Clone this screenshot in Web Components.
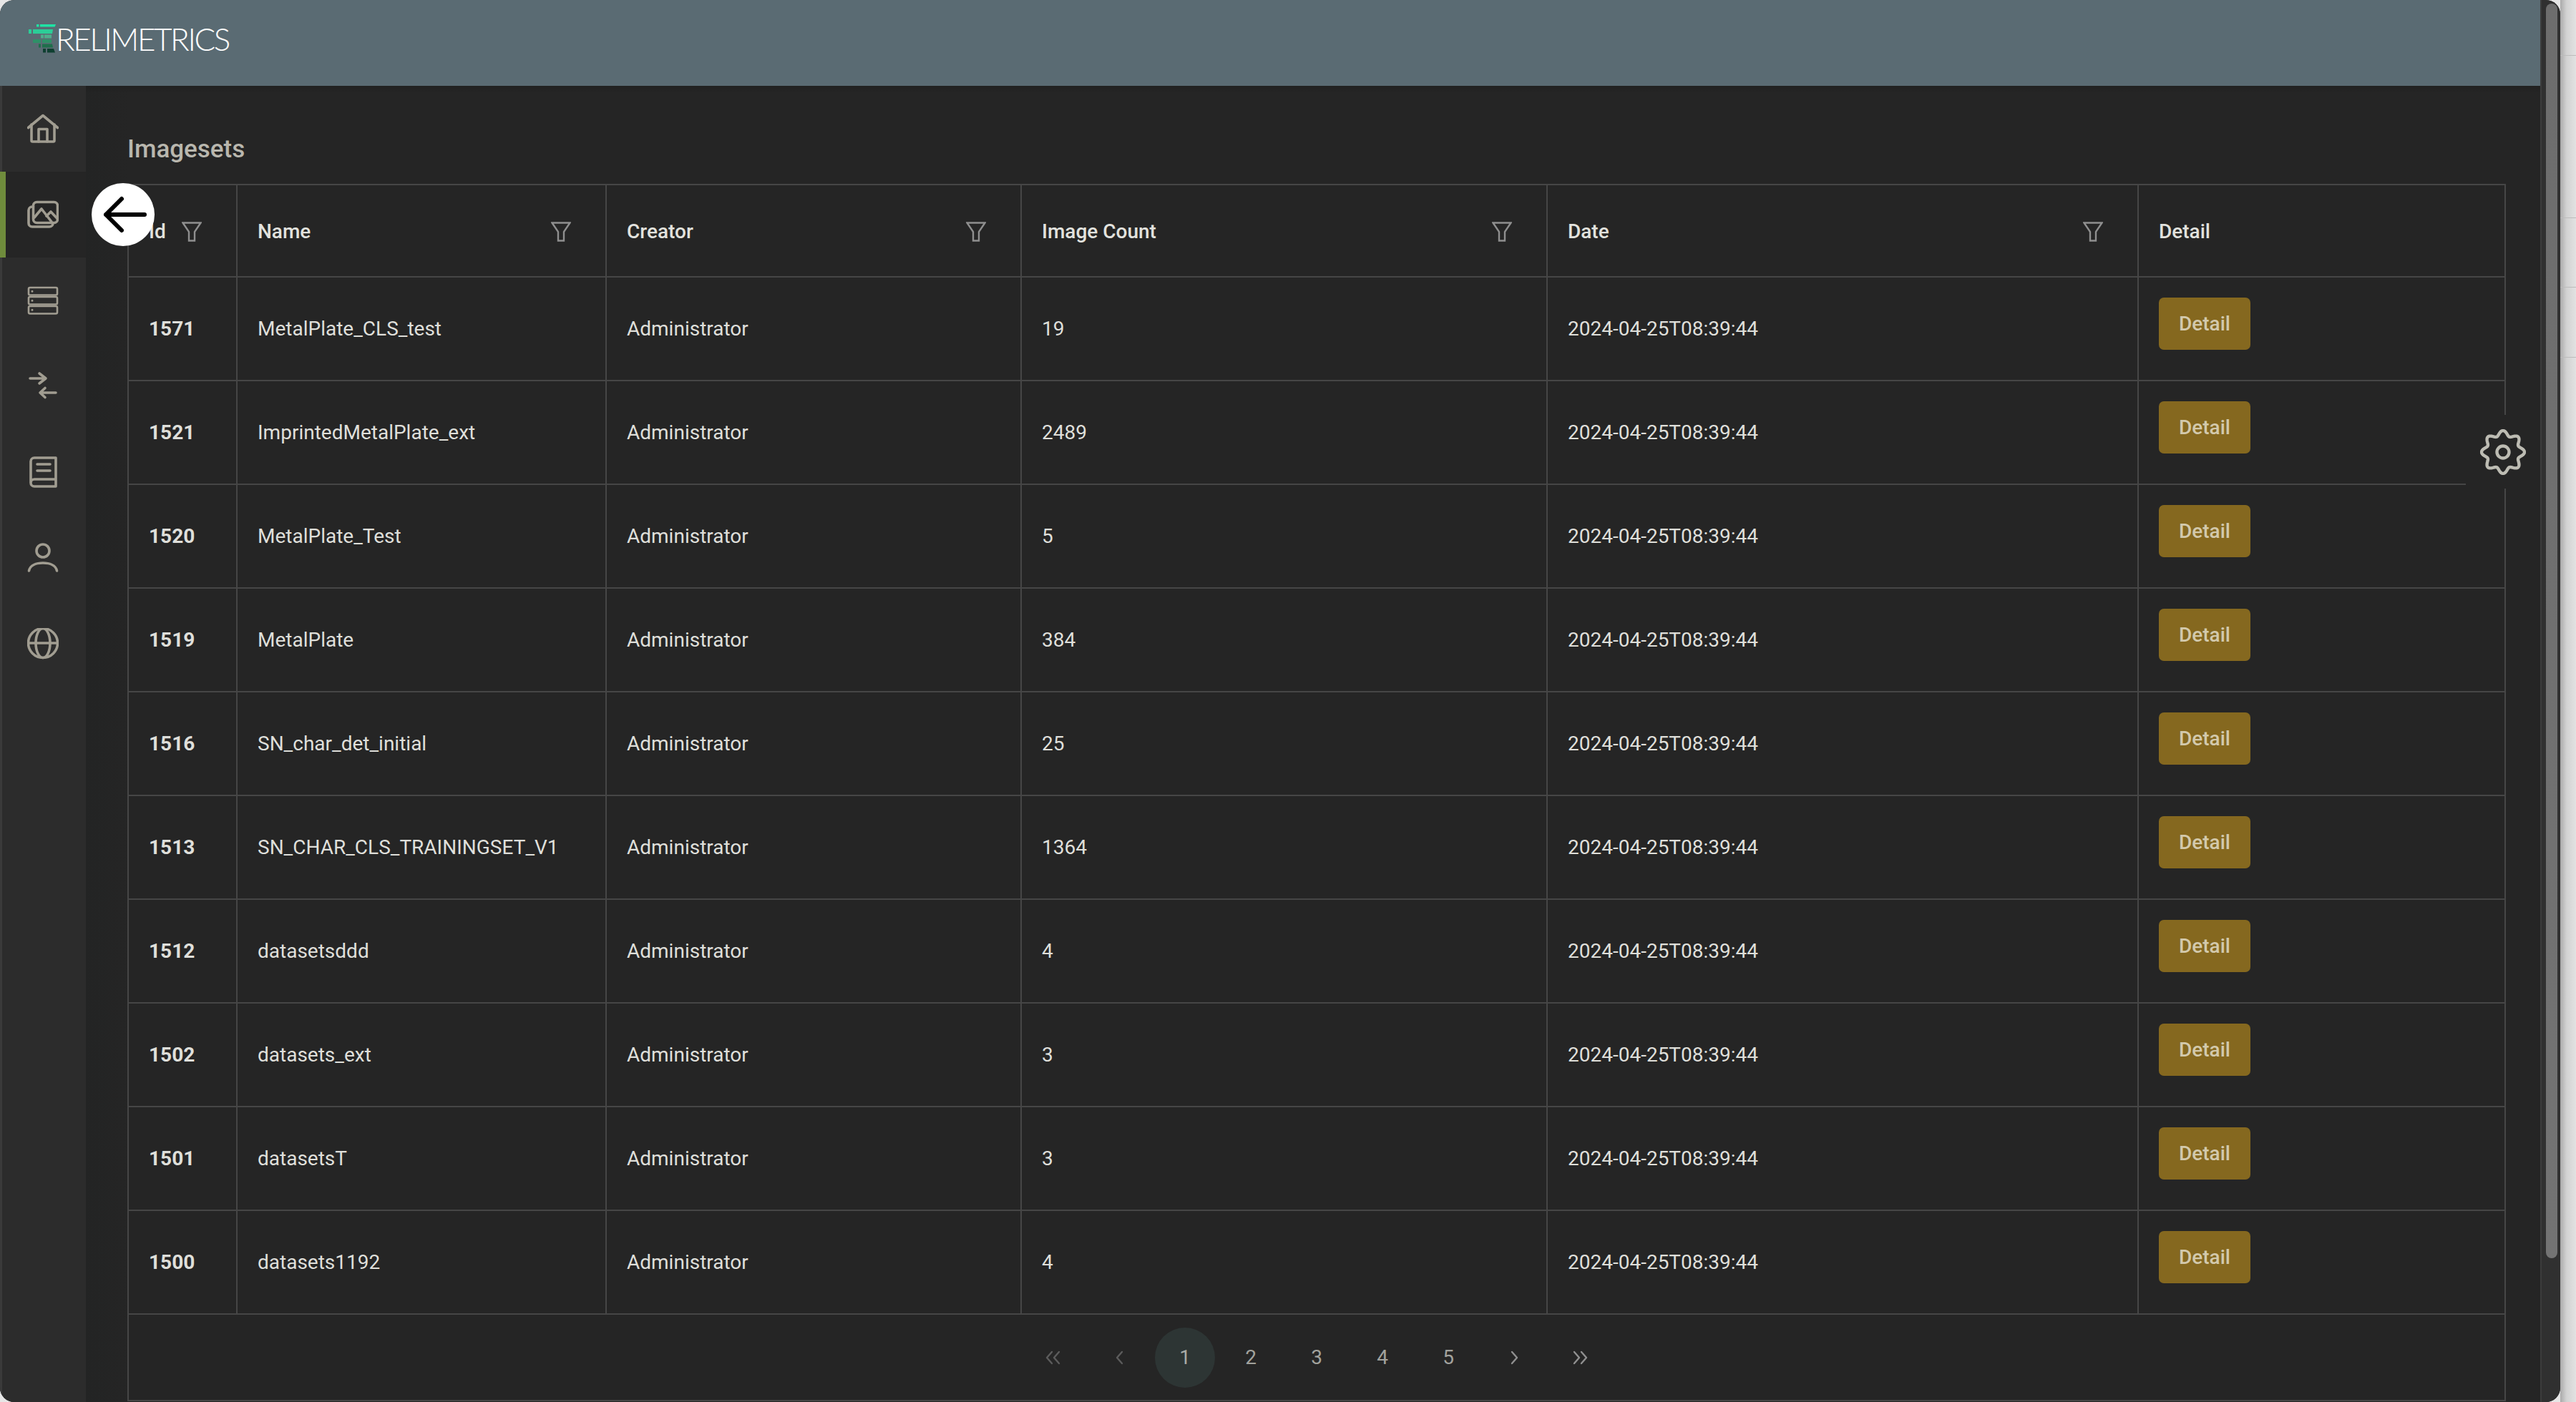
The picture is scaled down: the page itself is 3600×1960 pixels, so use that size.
<!DOCTYPE html>
<html lang="en"><head><meta charset="utf-8"><title>Imagesets</title>
<style>
html,body{margin:0;height:100%;background:#e6e6e6;overflow:hidden}
body{font-family:Roboto,"Liberation Sans",sans-serif;}
app-root{width:3600px;height:1960px}
</style></head><body>
<app-root></app-root>
<script>
const def=(n,html,extra)=>{customElements.define(n,class extends HTMLElement{
  connectedCallback(){ if(this.shadowRoot) return; const r=this.attachShadow({mode:'open'}); r.innerHTML=typeof html==='function'?html(this):html; }
});};
const ICONS={
home:`<path d="M1.5 20.5 22 3.5l20.5 17"/><path d="M6 16v22.5a1.5 1.5 0 0 0 1.5 1.5h29a1.5 1.5 0 0 0 1.5-1.5V16"/><path d="M16 40V22.5h12V40"/>`,
images:`<rect x="8.5" y="4.5" width="34" height="29" rx="5"/><path d="M8.5 11H7a5 5 0 0 0-5 5v18a5 5 0 0 0 5 5h24a5 5 0 0 0 5-5v-.5"/><path d="m10 26 10-12 14 18"/><path d="m27 24 6-6 9.5 10"/>`,
server:`<g stroke-width="2.6"><rect x="2" y="4" width="40" height="10.5" rx="2"/><rect x="2" y="17" width="40" height="10.5" rx="2"/><rect x="2" y="30" width="40" height="10.5" rx="2"/></g><g stroke-width="3" stroke-dasharray="0 6"><path d="M7 9.2h6M7 22.2h6M7 35.2h6"/></g>`,
swap:`<path d="M4 11h22M17 4l9 7-9 7"/><path d="M40 31H18M25 24.5 18 31l7 6.5"/>`,
book:`<path d="M5 37V7a5 5 0 0 1 5-5h30v40H10a5 5 0 0 1-5-5 5 5 0 0 1 5-5h30"/><path d="M14 11h18M14 20h18"/>`,
user:`<circle cx="22" cy="12" r="9"/><path d="M2.5 40C4 32 13 29 22 29s18 3 19.5 11"/>`,
globe:`<circle cx="22" cy="21" r="20.5"/><ellipse cx="22" cy="21" rx="10" ry="20.5"/><path d="M1.5 21h41"/>`
};
def('nav-icon',h=>`<style>:host{display:flex;align-items:center;justify-content:center;width:112px;height:120px;border-left:8px solid transparent;margin-left:0}
:host([active]){background:#252525;border-left-color:#6f8c3c}
:host(:not([active])){width:120px;border-left:0}
:host([active]) svg{margin-right:8px}
svg{width:44px;height:44px;fill:none;stroke:#a19d91;stroke-width:3.6;stroke-linecap:round;stroke-linejoin:round}</style>
<svg viewBox="0 0 44 44">${ICONS[h.getAttribute('name')]}</svg>`);
def('side-nav',`<style>:host{display:flex;flex-direction:column;flex:none;width:120px;background:#2c2c2c;box-shadow:inset 3px 0 0 #3a3a3a}</style><slot></slot>`);
def('brand-logo',`<style>:host{display:flex;align-items:center;gap:0;height:40px;color:#fff}
svg{width:38px;height:40px;flex:none}
span{font:300 44px/40px Lato,"Open Sans",sans-serif;letter-spacing:-2.4px;white-space:nowrap}</style>
<svg viewBox="0 0 38 40">
<g fill="#1fe3a4"><rect x="11" y="0" width="3.5" height="3.5"/><polygon points="16,0 38,0 36.6,3.5 16,3.5"/></g>
<g fill="#2ccd97"><rect x="0" y="7" width="4" height="6"/><polygon points="6,7 34,7 33,13 6,13"/></g>
<g fill="#4fae8c"><rect x="17" y="14.5" width="4" height="5"/><rect x="22" y="14.5" width="10" height="5"/></g>
<g fill="#2f9068"><rect x="6" y="21" width="11" height="5"/><rect x="19" y="21" width="13" height="5"/></g>
<g fill="#1f6f4c"><rect x="14" y="27.5" width="3" height="5"/><polygon points="19,27.5 33,27.5 34,32.5 19,32.5"/></g>
<g fill="#0e3f30"><rect x="20" y="34" width="4" height="5.5"/><polygon points="26,34 35,34 37,39.5 26,39.5"/></g>
</svg><span>RELIMETRICS</span>`);
def('top-bar',`<style>:host{display:block;flex:none;height:120px;background:#5a6b73;box-sizing:border-box;padding:34px 0 0 40px}</style><slot></slot>`);
def('filter-icon',`<style>:host{display:block;flex:none;width:28px;height:28px;margin-left:auto;margin-right:20px}
svg{display:block;width:28px;height:28px;fill:none;stroke:#8f8f8f;stroke-width:2.4;stroke-linejoin:miter}</style>
<svg viewBox="0 0 28 28"><path d="M1.5 1.5h25L18 14v12.5h-8V14z"/></svg>`);
def('detail-button',`<style>:host{display:flex;align-items:center;justify-content:center;width:128px;height:73px;border-radius:7px;background:#85681f;color:#d3c9ac;font:500 28px Roboto,sans-serif}</style>Detail`);
const ROWS=[[1571,'MetalPlate_CLS_test',19],[1521,'ImprintedMetalPlate_ext',2489],[1520,'MetalPlate_Test',5],[1519,'MetalPlate',384],[1516,'SN_char_det_initial',25],[1513,'SN_CHAR_CLS_TRAININGSET_V1',1364],[1512,'datasetsddd',4],[1502,'datasets_ext',3],[1501,'datasetsT',3],[1500,'datasets1192',4]];
const th=(t,f)=>`<div class="c h">${t}${f?'<filter-icon></filter-icon>':''}</div>`;
def('image-table',`<style>:host{display:block;box-sizing:border-box;width:3324px;height:1702px;border:2px solid #464646;border-bottom-width:2px;font:400 28px Roboto,sans-serif;color:#dfdfda}
.g{display:grid;grid-template-columns:152px 516px 580px 735px 826px 511px;grid-template-rows:129px repeat(10,145px)}
.c{box-sizing:border-box;display:flex;align-items:center;padding:0 28px;border-right:2px solid #464646;border-bottom:2px solid #464646;white-space:nowrap}
.c:nth-child(6n){border-right:0}
.h{font-weight:500;color:#e2e2de;padding-top:2px}
.b{font-weight:700}
.d{align-items:flex-start;padding-top:28px}
</style><div class="g">
${th('Id',1)}${th('Name',1)}${th('Creator',1)}${th('Image Count',1)}${th('Date',1)}${th('Detail')}
${ROWS.map(r=>`<div class="c b">${r[0]}</div><div class="c">${r[1]}</div><div class="c">Administrator</div><div class="c">${r[2]}</div><div class="c">2024-04-25T08:39:44</div><div class="c d"><detail-button></detail-button></div>`).join('')}
</div><page-nav></page-nav>`);
const chev=(p,c)=>`<svg viewBox="0 0 24 20" style="stroke:${c}"><path d="${p}"/></svg>`;
def('page-nav',`<style>:host{display:flex;align-items:center;justify-content:center;gap:8px;height:119px;color:#a2a29d;font:400 28px Roboto,sans-serif}
span{display:flex;align-items:center;justify-content:center;width:84px;height:84px;border-radius:50%}
.on{background:#2d3534;color:#a9aba6}
svg{width:24px;height:20px;fill:none;stroke-width:2.4;stroke-linecap:round;stroke-linejoin:round}</style>
<span>${chev('M10 2 3 10l7 8M20 2l-7 8 7 8','#5c5c5c')}</span><span>${chev('M16 2 9 10l7 8','#5c5c5c')}</span>
<span class="on">1</span><span>2</span><span>3</span><span>4</span><span>5</span>
<span>${chev('M9 2l7 8-7 8','#909090')}</span><span>${chev('M4 2l7 8-7 8M14 2l7 8-7 8','#909090')}</span>`);
let gear='';for(let i=0;i<=240;i++){const t=i/240*Math.PI*2,r=26.5+3.5*Math.cos(8*t);gear+=(i?'L':'M')+(32+r*Math.sin(t)).toFixed(2)+' '+(32-r*Math.cos(t)).toFixed(2);}
def('gear-fab',`<style>:host{position:absolute;right:0;top:460px;width:104px;height:103px;background:#252525;display:flex;align-items:center;justify-content:center}
svg{width:64px;height:64px;fill:none;stroke:#bdbcb3;stroke-width:4.4;stroke-linejoin:round}</style>
<svg viewBox="0 0 64 64"><path d="${gear}Z"/><circle cx="32" cy="32" r="8.5"/></svg>`);
def('back-fab',`<style>:host{position:absolute;top:136px;width:88px;height:88px;border-radius:50%;background:#fff;display:flex;align-items:center;justify-content:center}
svg{width:88px;height:88px;fill:none;stroke:#000;stroke-width:6;stroke-linecap:round;stroke-linejoin:round}</style>
<svg viewBox="0 0 88 88"><path d="M74 44H20M42 22 20 44l22 22"/></svg>`);
def('image-page',`<style>:host{display:block;position:relative;flex:1;min-width:0;height:1840px;background:linear-gradient(rgba(0,0,0,.12),rgba(0,0,0,0) 10px),linear-gradient(to right,#232424,#252525 60px);box-sizing:border-box;padding:0 0 0 58px;overflow:hidden}
h1{margin:0;height:137px;box-sizing:border-box;padding-top:71px;font:500 35px/36px Roboto,sans-serif;color:#b9b7ae}</style>
<h1>Imagesets</h1><image-table></image-table><gear-fab></gear-fab>`);
def('scroll-rail',`<style>:host{display:block;flex:none;width:28px;box-sizing:border-box;height:1960px;background:#303030;border-left:2px solid #3c3c3c;padding:5px 4px 0 6px}
div{height:1754px;border-radius:8px;background:linear-gradient(#6d6d6d,#737373)}</style><div></div>`);
def('page-edge',`<style>:host{display:block;flex:none;width:22px;height:1960px;background:linear-gradient(to right,#aaa,#d2d2d2 40%,#e2e2e2)}
div{box-sizing:border-box;border-bottom:1px solid #bcbcbc}</style>
<div style="height:78px"></div><div style="height:227px"></div><div style="height:97px"></div><div style="height:98px"></div>`);
def('app-root',`<style>:host{display:flex;position:relative}
.win{display:flex;flex:none;width:3578px;height:1960px;border-radius:20px;overflow:hidden;background:#252525}
.col{flex:1;min-width:0;display:flex;flex-direction:column}
.body{display:flex;position:relative}
</style>
<div class="win"><div class="col">
<top-bar><brand-logo></brand-logo></top-bar>
<div class="body"><side-nav>
<nav-icon name="home"></nav-icon><nav-icon name="images" active></nav-icon><nav-icon name="server"></nav-icon><nav-icon name="swap"></nav-icon><nav-icon name="book"></nav-icon><nav-icon name="user"></nav-icon><nav-icon name="globe"></nav-icon>
</side-nav><image-page></image-page><back-fab style="left:128px"></back-fab></div>
</div><scroll-rail></scroll-rail></div><page-edge></page-edge>`);
</script></body></html>
